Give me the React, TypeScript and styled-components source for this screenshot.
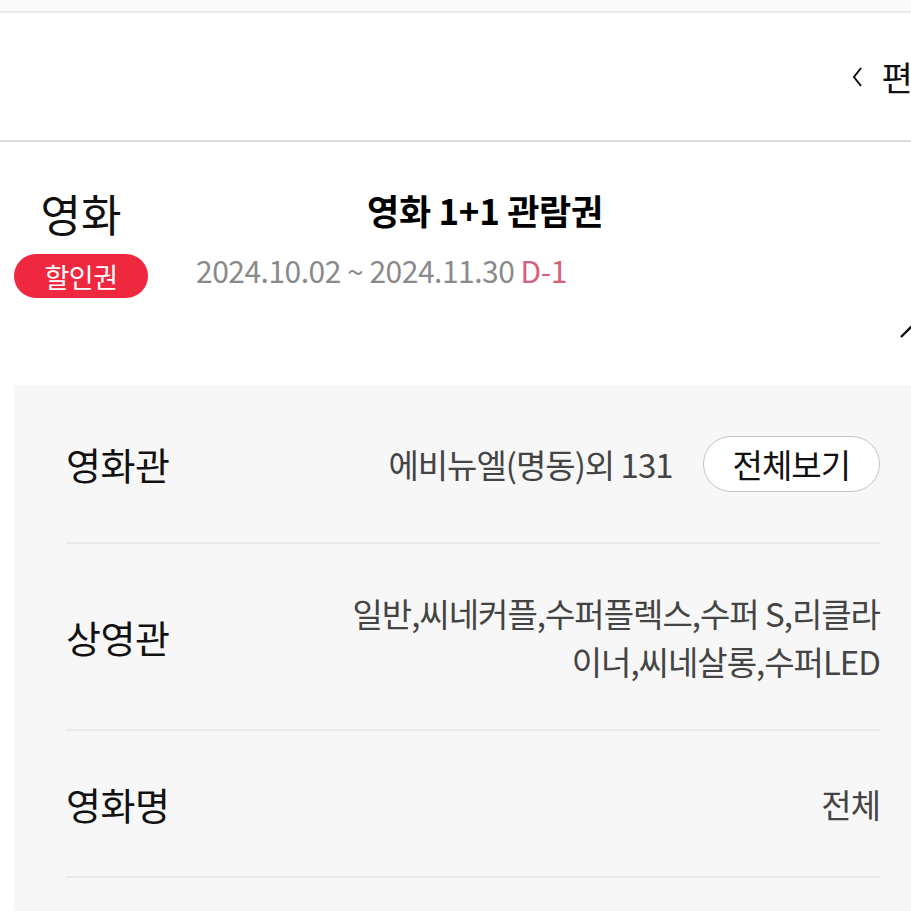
import styled, { createGlobalStyle } from 'styled-components';

const GlobalStyle = createGlobalStyle`
  html, body {
    margin: 0;
    padding: 0;
    background: #ffffff;
    overflow: hidden;
  }
  body {
    font-family: "Noto Sans CJK KR", "Noto Sans", sans-serif;
    color: #111;
  }
`;

const rows = [
  { label: '영화관', value: '에비뉴엘(명동)외 131', action: '전체보기', height: 159 },
  { label: '상영관', value: '일반,씨네커플,수퍼플렉스,수퍼 S,리클라이너,씨네살롱,수퍼LED', height: 187 },
  { label: '영화명', value: '전체', height: 147 },
];

export default function App() {
  return (
    <Viewport>
      <GlobalStyle />
      <Page>
        <TopStrip />
        <Header>
          <BackChevron width="12" height="22" viewBox="0 0 12 22">
            <path d="M10 2 L3 11 L10 20" fill="none" stroke="#111" strokeWidth="2" />
          </BackChevron>
          <HeaderLabel>편집</HeaderLabel>
        </Header>

        <Summary>
          <CategoryColumn>
            <Category>영화</Category>
            <Badge>할인권</Badge>
          </CategoryColumn>
          <InfoColumn>
            <Title>영화 1+1 관람권</Title>
            <Period>
              2024.10.02 ~ 2024.11.30 <DDay>D-1</DDay>
            </Period>
          </InfoColumn>
        </Summary>

        <CollapseRow>
          <svg width="34" height="20" viewBox="0 0 34 20">
            <path d="M2 18 L17 3 L32 18" fill="none" stroke="#111" strokeWidth="2.4" />
          </svg>
        </CollapseRow>

        <DetailPanel>
          {rows.map((row) => (
            <DetailRow key={row.label} $height={row.height}>
              <RowLabel>{row.label}</RowLabel>
              <RowRight>
                <RowValue>{row.value}</RowValue>
                {row.action && <PillButton>{row.action}</PillButton>}
              </RowRight>
            </DetailRow>
          ))}
        </DetailPanel>
      </Page>
    </Viewport>
  );
}

const Viewport = styled.div`
  width: 911px;
  height: 911px;
  overflow: hidden;
`;

const Page = styled.div`
  width: 950px;
`;

const TopStrip = styled.div`
  height: 11px;
  background: #fafafa;
  border-bottom: 2px solid #ebebeb;
`;

const Header = styled.div`
  height: 127px;
  display: flex;
  align-items: center;
  justify-content: flex-end;
  gap: 18px;
  padding-right: 6px;
  border-bottom: 2px solid #dcdcdc;
`;

const BackChevron = styled.svg`
  display: block;
`;

const HeaderLabel = styled.span`
  font-size: 34px;
  color: #111;
`;

const Summary = styled.div`
  display: grid;
  grid-template-columns: 134px 1fr;
  column-gap: 48px;
  padding: 42px 0 0 14px;
`;

const CategoryColumn = styled.div`
  display: flex;
  flex-direction: column;
  align-items: center;
  gap: 12px;
`;

const Category = styled.div`
  font-size: 44px;
  line-height: 58px;
  color: #111;
`;

const Badge = styled.div`
  width: 134px;
  height: 44px;
  border-radius: 22px;
  background: #ef2840;
  color: #fff;
  font-size: 27px;
  letter-spacing: -0.5px;
  display: flex;
  align-items: center;
  justify-content: center;
`;

const InfoColumn = styled.div`
  display: flex;
  flex-direction: column;
  gap: 14px;
`;

const Title = styled.div`
  padding-left: 171px;
  font-size: 35px;
  line-height: 52px;
  font-weight: 700;
  letter-spacing: -0.3px;
  color: #000;
`;

const Period = styled.div`
  font-size: 30px;
  line-height: 40px;
  letter-spacing: -0.5px;
  color: #8a8a8a;
`;

const DDay = styled.span`
  color: #d5607c;
`;

const CollapseRow = styled.div`
  display: flex;
  justify-content: flex-end;
  padding: 21px 17px 0 0;
  height: 30px;
`;

const DetailPanel = styled.div`
  margin: 36px 14px 0 14px;
  padding: 0 56px 80px 52px;
  background: #f7f7f7;
`;

const DetailRow = styled.div<{ $height: number }>`
  height: ${(p) => p.$height}px;
  box-sizing: border-box;
  display: flex;
  align-items: center;
  justify-content: space-between;
  border-bottom: 2px solid #ebebeb;
`;

const RowLabel = styled.div`
  font-size: 38px;
  letter-spacing: -0.5px;
  color: #111;
  flex-shrink: 0;
`;

const RowRight = styled.div`
  display: flex;
  align-items: center;
  gap: 30px;
`;

const RowValue = styled.div`
  max-width: 555px;
  text-align: right;
  word-break: break-all;
  font-size: 33px;
  line-height: 48px;
  letter-spacing: -1px;
  color: #444;
`;

const PillButton = styled.button`
  height: 56px;
  padding: 0 29px;
  border: 1.5px solid #c4c4c4;
  border-radius: 28px;
  background: #fff;
  font-family: inherit;
  font-size: 33px;
  letter-spacing: -1px;
  color: #111;
`;
